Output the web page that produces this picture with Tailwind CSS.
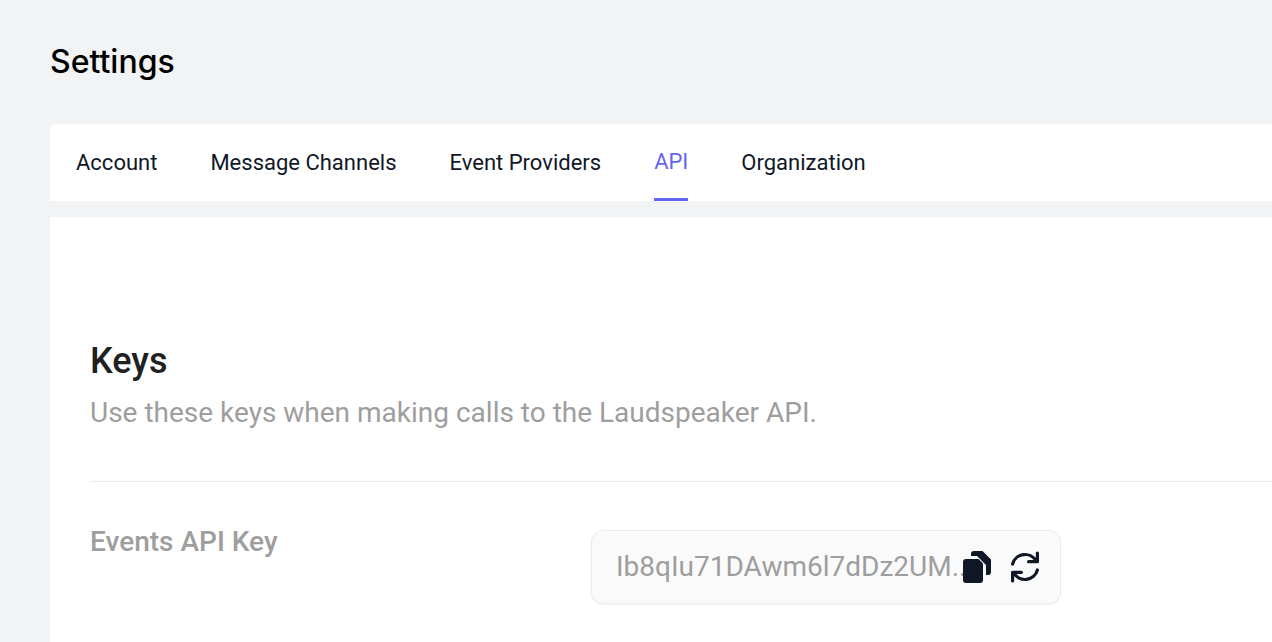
<!DOCTYPE html>
<html lang="en">
<head>
<meta charset="utf-8">
<title>Settings</title>
<script src="https://cdn.jsdelivr.net/npm/@tailwindcss/browser@4"></script>
</head>
<body class="min-h-screen overflow-x-hidden bg-[#f2f3f5] font-['Roboto',sans-serif]">
<main class="flex min-h-screen flex-col pl-[50px]">
  <h1 class="pt-10 font-['Inter',sans-serif] text-[32px] leading-[44px] font-medium text-black">Settings</h1>
  <nav class="mt-10 flex h-[77px] gap-[53px] rounded-tl-md bg-white px-[26px] text-[22px] leading-[77px] text-gray-900">
    <a href="#account">Account</a>
    <a href="#channels">Message Channels</a>
    <a href="#events">Event Providers</a>
    <a href="#api" aria-current="page" class="border-b-3 border-[#6366f1] leading-[75px] text-[#6366f1]">API</a>
    <a href="#organization">Organization</a>
  </nav>
  <section class="mt-4 grow bg-white pt-[120px] pl-10">
    <h2 class="text-[36px] leading-12 font-medium text-[#212121]">Keys</h2>
    <p class="mt-2 text-[28px] leading-10 text-[#9e9e9e]">Use these keys when making calls to the Laudspeaker API.</p>
    <div class="mt-12 flex border-t border-[#ececec] pt-12">
      <label for="key" class="w-[501px] text-[28px] leading-6 font-medium text-[#9e9e9e]">Events API Key</label>
      <div class="flex h-[74px] w-[470px] items-center rounded-xl border border-[#ececec] bg-[#fafafa] pr-[21px] pl-6 shadow-xs">
        <input id="key" readonly value="Ib8qIu71DAwm6l7dDz2UM.." class="w-0 grow text-[28px] text-[#9e9e9e] outline-none">
        <button aria-label="Copy key" class="text-gray-900"><svg class="h-8 w-7" viewBox="0 0 28 32" fill="currentColor"><path d="M3 8h12.500L20 12.500V29a3 3 0 0 1-3 3H3a3 3 0 0 1-3-3V11a3 3 0 0 1 3-3z"/><path d="M8 5V3a3 3 0 0 1 3-3h8.500L28 8.500V21a3 3 0 0 1-3 3h-2V14L14 5z"/></svg></button>
        <button aria-label="Regenerate key" class="ml-5 text-gray-900"><svg class="h-8 w-7" viewBox="0 0 28 32" fill="none" stroke="currentColor" stroke-width="3.200" stroke-linecap="round" stroke-linejoin="round"><path d="M1.600 13A12.800 12.800 0 0 1 25.200 10.200M26.400 2v8.700h-8.800M26.400 19A12.800 12.800 0 0 1 2.800 21.800M1.600 30v-8.700h8.800"/></svg></button>
      </div>
    </div>
  </section>
</main>
</body>
</html>
